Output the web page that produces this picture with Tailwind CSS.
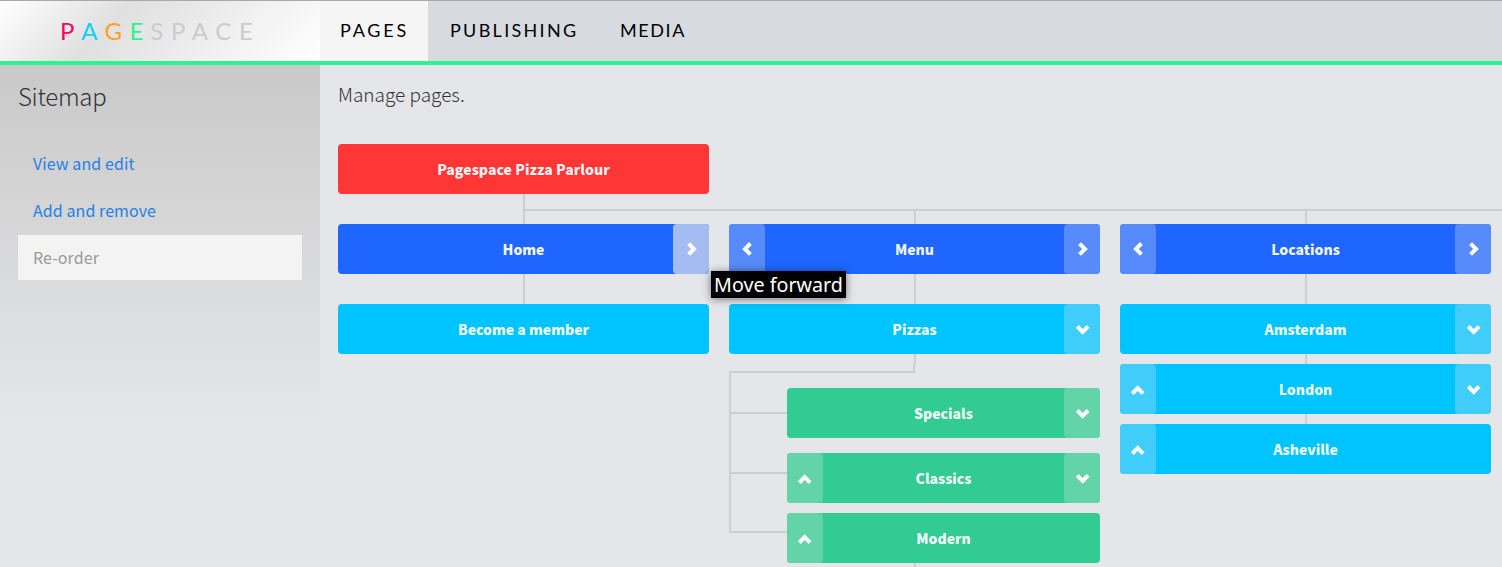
<!DOCTYPE html>
<html lang="en">
<head>
<meta charset="utf-8">
<title>Pagespace</title>
<script src="https://cdn.jsdelivr.net/npm/@tailwindcss/browser@4"></script>
</head>
<body class="w-[1502px] h-[567px] overflow-hidden bg-[#e5e6ea] font-['Noto_Sans_CJK_SC',sans-serif] text-[#333]">
<svg class="hidden">
  <symbol id="down" viewBox="0 0 14 10"><path d="M1.3 1.4l5.4 5.4 5.4-5.4" fill="none" stroke="#fff" stroke-width="4"/></symbol>
  <symbol id="up" viewBox="0 0 14 10"><path d="M1.3 8.6l5.4-5.4 5.4 5.4" fill="none" stroke="#fff" stroke-width="4"/></symbol>
  <symbol id="right" viewBox="0 0 10 14"><path d="M1.6 1.6l5.4 5.4-5.4 5.4" fill="none" stroke="#fff" stroke-width="4"/></symbol>
  <symbol id="left" viewBox="0 0 10 14"><path d="M8.4 1.5l-5.4 5.4 5.4 5.4" fill="none" stroke="#fff" stroke-width="4"/></symbol>
</svg>
<header class="flex h-[65px] border-t border-t-[#a9a9ac] border-b-4 border-b-[#2af38f] bg-[#d7dadf] font-[Lato,sans-serif]">
  <div class="w-80 pl-[60px] flex items-center text-[24px] tracking-[6.9px] text-[#cbcbcb] bg-[linear-gradient(135deg,#fff_0%,#e0e0e0_35%,#fff_100%)]">
    <span class="text-[#ff0062]">P</span><span class="text-[#0cd2f5]">A</span><span class="text-[#ffa023] tracking-[7.4px]">G</span><span class="text-[#2af38f]">E</span><span class="tracking-[7.7px]">SPACE</span>
  </div>
  <nav class="flex text-[18px] text-black leading-[58px]">
    <a class="w-[108px] h-[60px] pl-5 bg-[#f5f5f5] tracking-[2.8px]">PAGES</a>
    <a class="w-[170px] pl-[22px] tracking-[2.3px]">PUBLISHING</a>
    <a class="pl-[22px] tracking-[1.6px]">MEDIA</a>
  </nav>
</header>
<div class="flex">
  <aside class="w-80 h-[502px] shrink-0 px-[18px] bg-[linear-gradient(#c9c9c9_0px,#cfcfcf_70px,#e5e6ea_360px)]">
    <h1 class="pt-[15px] h-[76px] text-[24px] tracking-[-0.3px] leading-8 font-light">Sitemap</h1>
    <ul class="flex flex-col gap-0.5 text-[16px] tracking-[0.08px] leading-[45px] text-[#2480e6]">
      <li class="pl-[15px]">View and edit</li>
      <li class="pl-[15px]">Add and remove</li>
      <li class="pl-[15px] bg-[#f3f3f3] text-[#999]">Re-order</li>
    </ul>
  </aside>
  <main class="w-[1182px] h-[502px] overflow-hidden pl-[18px]">
    <p class="pt-[15px] h-[79px] text-[19px] leading-7 font-light">Manage pages.</p>
    <div class="w-[371px] h-[50px] rounded bg-[#ff3636] text-white/95 font-black text-[14px] tracking-[0.06px] leading-[50px] text-center">Pagespace Pizza Parlour</div>
    <div class="ml-[185px] h-[15px] w-0.5 bg-[#cdced2]"></div>
    <div class="ml-[185px] h-0.5 bg-[#cdced2]"></div>
    <div class="flex gap-5 text-white/95 font-black text-[14px] leading-[50px] text-center">
      <section class="w-[371px] shrink-0">
        <div class="ml-[185px] h-[13px] w-0.5 bg-[#cdced2]"></div>
        <div class="flex h-[50px] rounded bg-[#1e66ff]">
          <span class="w-9"></span><span class="flex-1">Home</span>
          <button class="w-9 rounded bg-[#a4bcf2] flex items-center justify-center pl-0.5"><svg class="w-[10px] h-[14px]"><use href="#right"/></svg></button>
        </div>
        <div class="ml-[185px] h-[30px] w-0.5 bg-[#cdced2]"></div>
        <div class="h-[50px] rounded bg-[#00c4ff]">Become a member</div>
      </section>
      <section class="w-[371px] shrink-0">
        <div class="ml-[185px] h-[13px] w-0.5 bg-[#cdced2]"></div>
        <div class="flex h-[50px] rounded bg-[#1e66ff]">
          <button class="w-9 rounded bg-[#578afa] flex items-center justify-center"><svg class="w-[10px] h-[14px]"><use href="#left"/></svg></button>
          <span class="flex-1">Menu</span>
          <button class="w-9 rounded bg-[#578afa] flex items-center justify-center pl-0.5"><svg class="w-[10px] h-[14px]"><use href="#right"/></svg></button>
        </div>
        <div class="ml-[185px] h-[30px] w-0.5 bg-[#cdced2]"></div>
        <div class="flex h-[50px] rounded bg-[#00c4ff]">
          <span class="w-9"></span><span class="flex-1">Pizzas</span>
          <button class="w-9 rounded bg-[#40cdfa] flex items-center justify-center pl-px pt-0.5"><svg class="w-[14px] h-[10px]"><use href="#down"/></svg></button>
        </div>
        <div class="ml-[185px] h-[10px] w-0.5 bg-[#cdced2]"></div>
        <div class="w-[186px] h-[9px] border-r-2 border-b-2 border-[#cdced2]"></div>
        <div class="flex">
          <div class="w-[58px]">
            <div class="h-[41px] border-l-2 border-b-2 border-[#cdced2]"></div>
            <div class="h-[60px] border-l-2 border-b-2 border-[#cdced2]"></div>
            <div class="h-[59px] border-l-2 border-b-2 border-[#cdced2]"></div>
          </div>
          <div class="flex-1 pt-[15px]">
            <div class="flex h-[50px] rounded bg-[#32cb94] mb-[15px]">
              <span class="w-9"></span><span class="flex-1">Specials</span>
              <button class="w-9 rounded bg-[#63d3aa] flex items-center justify-center pl-px pt-0.5"><svg class="w-[14px] h-[10px]"><use href="#down"/></svg></button>
            </div>
            <div class="flex h-[50px] rounded bg-[#32cb94] mb-[10px]">
              <button class="w-9 rounded bg-[#63d3aa] flex items-center justify-center pt-0.5"><svg class="w-[14px] h-[10px]"><use href="#up"/></svg></button>
              <span class="flex-1">Classics</span>
              <button class="w-9 rounded bg-[#63d3aa] flex items-center justify-center pl-px pt-0.5"><svg class="w-[14px] h-[10px]"><use href="#down"/></svg></button>
            </div>
            <div class="flex h-[50px] rounded bg-[#32cb94]">
              <button class="w-9 rounded bg-[#63d3aa] flex items-center justify-center pt-0.5"><svg class="w-[14px] h-[10px]"><use href="#up"/></svg></button>
              <span class="flex-1">Modern</span><span class="w-9"></span>
            </div>
            <div class="ml-[127px] h-[10px] w-0.5 bg-[#cdced2]"></div>
          </div>
        </div>
      </section>
      <section class="w-[371px] shrink-0">
        <div class="ml-[185px] h-[13px] w-0.5 bg-[#cdced2]"></div>
        <div class="flex h-[50px] rounded bg-[#1e66ff]">
          <button class="w-9 rounded bg-[#578afa] flex items-center justify-center"><svg class="w-[10px] h-[14px]"><use href="#left"/></svg></button>
          <span class="flex-1">Locations</span>
          <button class="w-9 rounded bg-[#578afa] flex items-center justify-center pl-0.5"><svg class="w-[10px] h-[14px]"><use href="#right"/></svg></button>
        </div>
        <div class="ml-[185px] h-[30px] w-0.5 bg-[#cdced2]"></div>
        <div class="flex h-[50px] rounded bg-[#00c4ff]">
          <span class="w-9"></span><span class="flex-1">Amsterdam</span>
          <button class="w-9 rounded bg-[#40cdfa] flex items-center justify-center pl-px pt-0.5"><svg class="w-[14px] h-[10px]"><use href="#down"/></svg></button>
        </div>
        <div class="ml-[185px] h-[10px] w-0.5 bg-[#cdced2]"></div>
        <div class="flex h-[50px] rounded bg-[#00c4ff]">
          <button class="w-9 rounded bg-[#40cdfa] flex items-center justify-center pt-0.5"><svg class="w-[14px] h-[10px]"><use href="#up"/></svg></button>
          <span class="flex-1">London</span>
          <button class="w-9 rounded bg-[#40cdfa] flex items-center justify-center pl-px pt-0.5"><svg class="w-[14px] h-[10px]"><use href="#down"/></svg></button>
        </div>
        <div class="ml-[185px] h-[10px] w-0.5 bg-[#cdced2]"></div>
        <div class="flex h-[50px] rounded bg-[#00c4ff]">
          <button class="w-9 rounded bg-[#40cdfa] flex items-center justify-center pt-0.5"><svg class="w-[14px] h-[10px]"><use href="#up"/></svg></button>
          <span class="flex-1">Asheville</span><span class="w-9"></span>
        </div>
      </section>
    </div>
  </main>
</div>
<div class="absolute left-[711px] top-[271px] w-[135px] h-[27px] bg-black text-white text-center whitespace-nowrap font-['Noto_Sans',sans-serif] text-[19.7px] leading-[27px] shadow-[0_1px_8px_rgba(0,0,0,0.5)]">Move forward</div>
</body>
</html>
